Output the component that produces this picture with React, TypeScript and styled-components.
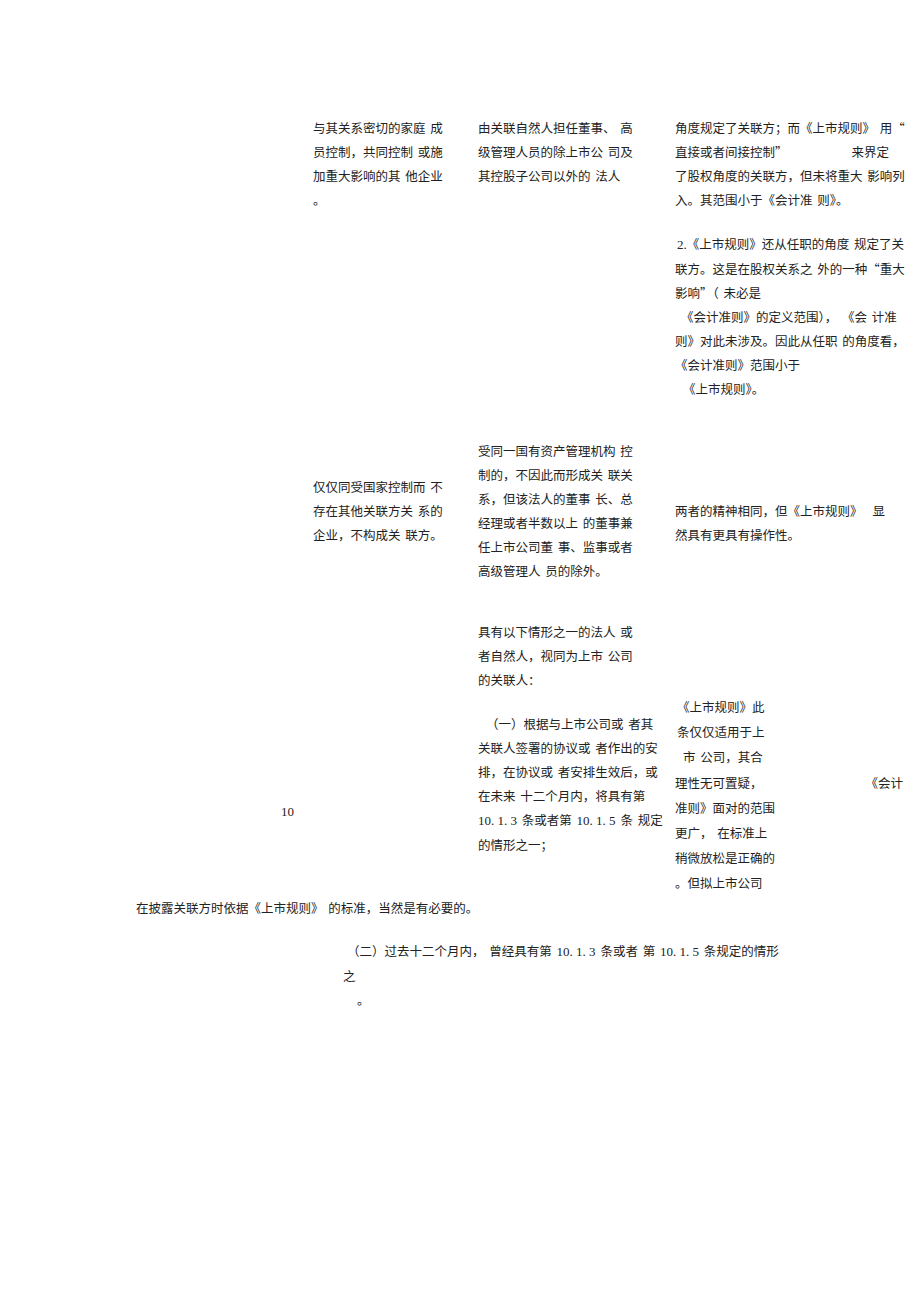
import React from "react";
import styled, { createGlobalStyle } from "styled-components";

const GlobalStyle = createGlobalStyle`
  html, body { margin: 0; padding: 0; background: #ffffff; }
  body {
    font-family: "Noto Sans CJK SC", "Noto Sans", sans-serif;
    font-size: 12.5px;
    color: #222222;
  }
`;

const Page = styled.div`
  width: 920px;
  min-height: 1301px;
  padding-top: 116px;
  box-sizing: border-box;
`;

const Row = styled.div<{ $top?: number }>`
  display: grid;
  grid-template-columns: 313px 165px 197px 1fr;
  margin-top: ${(p) => p.$top ?? 0}px;
  align-items: start;
`;

const Cell = styled.div<{ $pt?: number; $lh?: number; $pl?: number }>`
  padding-top: ${(p) => p.$pt ?? 0}px;
  padding-left: ${(p) => p.$pl ?? 0}px;
  line-height: ${(p) => p.$lh ?? 24}px;
`;

const Para = styled.div<{ $gap?: number }>`
  & + & {
    margin-top: ${(p) => p.$gap ?? 19}px;
  }
`;

const Line = styled.div<{ $indent?: number }>`
  white-space: pre;
  word-spacing: 2px;
  padding-left: ${(p) => p.$indent ?? 0}px;
`;

const Gap = styled.span<{ $w: number }>`
  display: inline-block;
  width: ${(p) => p.$w}px;
`;

const Num = styled.span`
  font-family: "Liberation Serif", "Times New Roman", serif;
  font-size: 13px;
  word-spacing: 0;
`;

const Block = styled.div<{ $top?: number }>`
  margin-top: ${(p) => p.$top ?? 0}px;
  line-height: 24px;
`;

export default function App() {
  return (
    <>
      <GlobalStyle />
      <Page>
        <Row>
          <div />
          <Cell>
            <Line>与其关系密切的家庭 成</Line>
            <Line>员控制，共同控制 或施</Line>
            <Line>加重大影响的其 他企业</Line>
            <Line>。</Line>
          </Cell>
          <Cell>
            <Line>由关联自然人担任董事、 高</Line>
            <Line>级管理人员的除上市公 司及</Line>
            <Line>其控股子公司以外的 法人</Line>
          </Cell>
          <Cell>
            <Para>
              <Line>角度规定了关联方；而《上市规则》 用“</Line>
              <Line>
                直接或者间接控制”<Gap $w={64} />来界定
              </Line>
              <Line>了股权角度的关联方，但未将重大 影响列</Line>
              <Line>入。其范围小于《会计准 则》。</Line>
            </Para>
            <Para $gap={19}>
              <Line $indent={2}>
                <Num>2.</Num>《上市规则》还从任职的角度 规定了关
              </Line>
              <Line>联方。这是在股权关系之 外的一种“重大</Line>
              <Line>影响”（ 未必是</Line>
              <Line $indent={6}>《会计准则》的定义范围）， 《会 计准</Line>
              <Line>则》对此未涉及。因此从任职 的角度看，</Line>
              <Line>《会计准则》范围小于</Line>
              <Line $indent={8}>《上市规则》。</Line>
            </Para>
          </Cell>
        </Row>

        <Row $top={38}>
          <div />
          <Cell $pt={36}>
            <Line>仅仅同受国家控制而 不</Line>
            <Line>存在其他关联方关 系的</Line>
            <Line>企业，不构成关 联方。</Line>
          </Cell>
          <Cell>
            <Line>受同一国有资产管理机构 控</Line>
            <Line>制的，不因此而形成关 联关</Line>
            <Line>系，但该法人的董事 长、总</Line>
            <Line>经理或者半数以上 的董事兼</Line>
            <Line>任上市公司董 事、监事或者</Line>
            <Line>高级管理人 员的除外。</Line>
          </Cell>
          <Cell $pt={60}>
            <Line>
              两者的精神相同，但《上市规则》<Gap $w={10} />显
            </Line>
            <Line>然具有更具有操作性。</Line>
          </Cell>
        </Row>

        <Row $top={37}>
          <Cell $pt={179} $pl={281}>
            <Num>10</Num>
          </Cell>
          <Cell />
          <Cell>
            <Para $gap={20}>
              <Line>具有以下情形之一的法人 或</Line>
              <Line>者自然人，视同为上市 公司</Line>
              <Line>的关联人：</Line>
            </Para>
            <Para $gap={20}>
              <Line $indent={8}>（一）根据与上市公司或 者其</Line>
              <Line>关联人签署的协议或 者作出的安</Line>
              <Line>排，在协议或 者安排生效后，或</Line>
              <Line>在未来 十二个月内，将具有第</Line>
              <Line>
                <Num>10. 1. 3</Num> 条或者第 <Num>10. 1. 5</Num> 条 规定
              </Line>
              <Line>的情形之一；</Line>
            </Para>
          </Cell>
          <Cell $pt={74} $lh={25.2}>
            <Line $indent={2}>《上市规则》此</Line>
            <Line $indent={2}>条仅仅适用于上</Line>
            <Line $indent={8}>市 公司，其合</Line>
            <Line>
              理性无可置疑，<Gap $w={103} />《会计
            </Line>
            <Line>准则》面对的范围</Line>
            <Line>更广， 在标准上</Line>
            <Line>稍微放松是正确的</Line>
            <Line>。但拟上市公司</Line>
          </Cell>
        </Row>

        <Block>
          <Line $indent={136}>在披露关联方时依据《上市规则》 的标准，当然是有必要的。</Line>
        </Block>

        <Block $top={19}>
          <Line $indent={347}>
            （二）过去十二个月内， 曾经具有第 <Num>10. 1. 3</Num> 条或者 第 <Num>10. 1. 5</Num> 条规定的情形
          </Line>
          <Line $indent={343}>之</Line>
          <Line $indent={357}>。</Line>
        </Block>
      </Page>
    </>
  );
}
